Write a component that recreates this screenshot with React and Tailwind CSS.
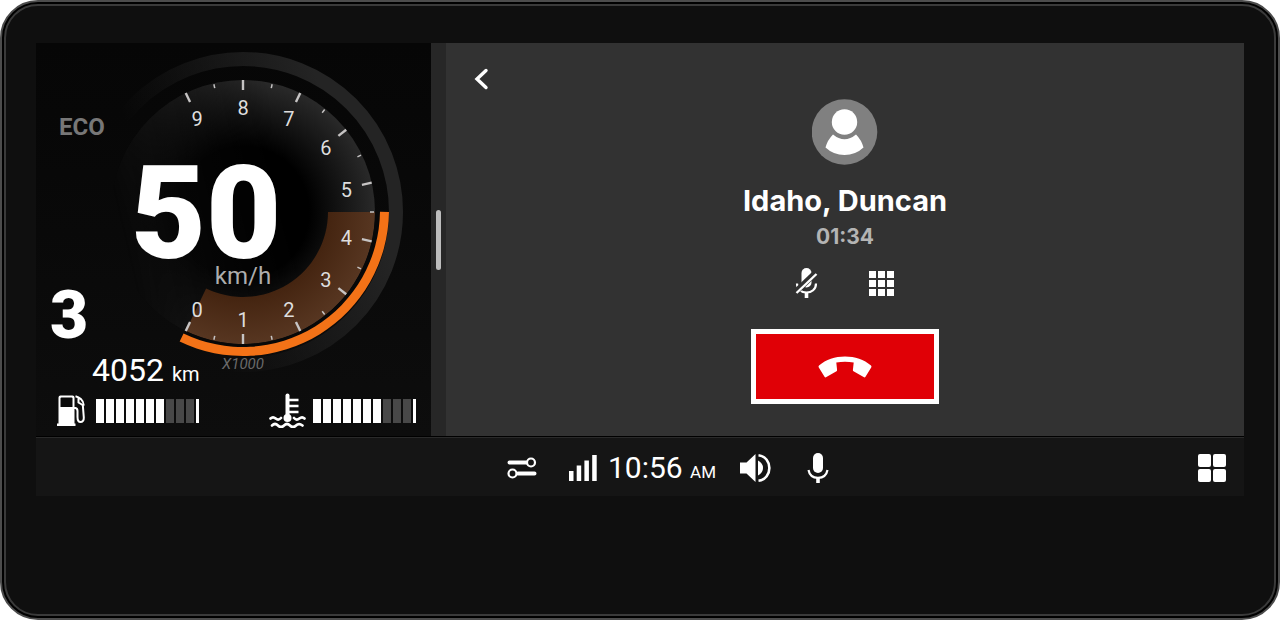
const STEP = 180 / 7;
const RPM = 4.5;

// 1 sits at the bottom of the dial, values grow counter-clockwise
function polar(value, radius) {
  const a = ((value - 1) * STEP * Math.PI) / 180;
  return [radius * Math.sin(a), radius * Math.cos(a)];
}

function ringSegment(from, to, inner, outer) {
  const [ax, ay] = polar(from, outer);
  const [bx, by] = polar(to, outer);
  const [cx, cy] = polar(to, inner);
  const [dx, dy] = polar(from, inner);
  return `M${ax} ${ay}A${outer} ${outer} 0 0 0 ${bx} ${by}L${cx} ${cy}A${inner} ${inner} 0 0 1 ${dx} ${dy}Z`;
}

function Tick({ value, inner, outer, width }) {
  const [x1, y1] = polar(value, inner);
  const [x2, y2] = polar(value, outer);
  return <line x1={x1} y1={y1} x2={x2} y2={y2} stroke="#c6c4c4" strokeWidth={width} />;
}

function Gauge() {
  const numbers = [0, 1, 2, 3, 4, 5, 6, 7, 8, 9];

  return (
    <svg viewBox="-160 -160 320 320" className="absolute top-[9px] right-7 size-[320px] overflow-visible">
      <defs>
        <linearGradient id="ring" gradientUnits="userSpaceOnUse" x1="-70" y1="28" x2="110" y2="-44">
          <stop offset="0" stopColor="#222222" stopOpacity="0" />
          <stop offset="1" stopColor="#242424" />
        </linearGradient>
        <radialGradient id="face" gradientUnits="userSpaceOnUse" cx="0" cy="0" r="132">
          <stop offset="0.5" stopColor="#000000" />
          <stop offset="1" stopColor="#292929" />
        </radialGradient>
        <linearGradient id="fade" gradientUnits="userSpaceOnUse" x1="-120" y1="20" x2="50" y2="-20">
          <stop offset="0" stopColor="#000000" />
          <stop offset="0.4" stopColor="#606060" />
          <stop offset="1" stopColor="#ffffff" />
        </linearGradient>
        <mask id="faceMask">
          <rect x="-160" y="-160" width="320" height="320" fill="url(#fade)" />
        </mask>
        <radialGradient id="sweep" gradientUnits="userSpaceOnUse" cx="0" cy="0" r="132">
          <stop offset="0.64" stopColor="#442410" />
          <stop offset="1" stopColor="#573621" />
        </radialGradient>
      </defs>

      <circle r="153" fill="none" stroke="url(#ring)" strokeWidth="14" />
      <circle r="132" fill="url(#face)" mask="url(#faceMask)" />
      <path d={ringSegment(0, RPM, 85, 132)} fill="url(#sweep)" />
      <path d={ringSegment(0, RPM, 132, 137)} fill="#080808" />
      <path d={ringSegment(0, RPM - 0.03, 137, 146)} transform="translate(0 -2)" fill="#f37217" />

      {numbers.map((n) => (
        <Tick key={n} value={n} inner={122} outer={132} width={2.4} />
      ))}
      {numbers.slice(0, 9).map((n) => (
        <Tick key={n} value={n + 0.5} inner={127} outer={131} width={1.5} />
      ))}
      {numbers.map((n) => {
        const [x, y] = polar(n, 106);
        return (
          <text key={n} x={x} y={y + 9} textAnchor="middle" fontSize="20" fill="#dedede">
            {n}
          </text>
        );
      })}

      <text x="-37" y="46" textAnchor="middle" fontSize="130" fontWeight="900" fill="#ffffff">
        50
      </text>
      <text x="0" y="72" textAnchor="middle" fontSize="24" fill="#adadad">
        km/h
      </text>
      <text x="0" y="157" textAnchor="middle" fontSize="15" fontStyle="italic" fill="#6a6a6a">
        X1000
      </text>
    </svg>
  );
}

function LevelBar({ label, level }) {
  return (
    <div role="meter" aria-label={label} aria-valuenow={level} aria-valuemin={0} aria-valuemax={10} className="flex h-6 gap-[2px]">
      {Array.from({ length: 10 }, (_, i) => (
        <span key={i} className={i < level ? 'w-2 bg-white' : 'w-2 bg-[#484848]'} />
      ))}
      <span className="w-[3px] bg-white" />
    </div>
  );
}

function FuelIcon() {
  return (
    <svg viewBox="0 0 28 32" className="h-8 w-7" fill="none" stroke="#ffffff">
      <path d="M1.500 28.500V2.500a2 2 0 0 1 2-2h12a2 2 0 0 1 2 2V28.500h1V31H0V28.500Z" fill="#ffffff" stroke="none" />
      <path d="M3.500 3.500a1 1 0 0 1 1-1H14.500a1 1 0 0 1 1 1V12H3.500Z" fill="#0a0a0a" stroke="none" />
      <path d="M17 13h1.500q2 .5 2 3v6c0 3.500 1 5 3 5s3.500-1.500 3.300-4.500L25.800 10" strokeWidth="2" />
      <path d="M18.500 1.200C22 2 26.500 5 26.800 10.500M21.500 3v4.500l5 3" strokeWidth="2" />
    </svg>
  );
}

function CoolantIcon() {
  return (
    <svg viewBox="0 0 37 35" className="h-[35px] w-[37px]" fill="none" stroke="#ffffff" strokeLinecap="round">
      <path d="M18.500 2.500V23" strokeWidth="4" />
      <circle cx="18.500" cy="25" r="4" fill="#ffffff" stroke="none" />
      <path d="M20 7h9.500M20 13h9.500M20 19h9.500" strokeWidth="2.400" strokeLinecap="butt" />
      <path d="M1.500 25.500c2-2 3.500-1.500 5.200 0s3.500 1.500 5.300-.5M25 25c1.800 2 3.500 2 5.300.5s3.200-2 5.200 0" strokeWidth="2.600" />
      <path d="M3 32.500c2-2 4-2 6 0s4 2 6 0 4-2 6 0 4 2 6 0 4-2 6.500 0" strokeWidth="2.600" />
    </svg>
  );
}

function Cluster() {
  return (
    <section className="relative flex w-[395px] shrink-0 flex-col bg-gradient-to-b from-[#060606] to-[#0d0d0d] font-['Roboto',sans-serif] text-white">
      <Gauge />
      <p className="mt-[72px] ml-[23px] text-2xl leading-6 font-bold text-[#777777]">ECO</p>
      <p className="mt-auto ml-[14px] text-[66px] leading-[60px] font-black">3</p>
      <p className="mt-[5px] ml-14 text-[32px] leading-[38px]">
        4052 <span className="text-[20px]">km</span>
      </p>
      <div className="mb-2 flex items-center justify-between pr-[15px] pl-[21px]">
        <div className="flex items-center gap-[11px]">
          <FuelIcon />
          <LevelBar label="Fuel" level={7} />
        </div>
        <div className="flex items-center gap-[7px]">
          <CoolantIcon />
          <LevelBar label="Coolant temperature" level={7} />
        </div>
      </div>
    </section>
  );
}

function CallPanel() {
  return (
    <section className="flex flex-1 flex-col bg-[#323232] font-['Inter',sans-serif]">
      <div className="px-6 pt-6">
        <button aria-label="Back" className="block size-6">
          <svg viewBox="0 0 24 24" className="size-6" fill="none" stroke="#ffffff" strokeWidth="3.400" strokeLinecap="round">
            <path d="M16 3.500 7 12l9 8.500" />
          </svg>
        </button>
      </div>

      <div className="mt-2 flex flex-col items-center">
        <svg viewBox="0 0 66 66" className="size-[66px]">
          <circle cx="32.500" cy="33" r="32.800" fill="#808080" />
          <circle cx="32.500" cy="23" r="12.700" fill="#ffffff" />
          <path d="M21 35.500Q32.500 45 44 35.500Q49.500 41 51.500 48.500Q43.500 56 32.500 56T13.500 48.500Q15.500 41 21 35.500Z" fill="#ffffff" />
        </svg>
        <h1 className="mt-5 text-[29px] leading-8 font-bold text-white">Idaho, Duncan</h1>
        <p className="mt-1 text-[21px] leading-8 font-bold text-[#b4b4b4]">01:34</p>

        <div className="mt-[15px] flex items-center gap-12 pr-1">
          <button aria-label="Mute">
            <svg viewBox="1 0 28 30" className="block h-[30px] w-7" fill="none">
              <rect x="9.500" y="0" width="10" height="19.500" rx="5" fill="#ffffff" />
              <path d="M5 15.500c0 6 4.500 9 9.500 9s9.500-3 9.500-9" stroke="#ffffff" strokeWidth="2.200" />
              <path d="M14.500 24v6" stroke="#ffffff" strokeWidth="3.600" />
              <path d="M3 24.500 24 4.500" stroke="#323232" strokeWidth="6" />
              <path d="M4.500 25 24.500 6" stroke="#ffffff" strokeWidth="2.400" />
            </svg>
          </button>
          <button aria-label="Keypad" className="grid grid-cols-3 gap-[2px]">
            {Array.from({ length: 9 }, (_, i) => (
              <span key={i} className="size-[7px] bg-white" />
            ))}
          </button>
        </div>

        <button aria-label="End call" className="mt-[31px] flex h-[75px] w-[188px] items-center justify-center border-5 border-white bg-[#e00006]">
          <svg viewBox="0 0 54 22" className="h-[22px] w-[54px]" fill="#ffffff">
            <path d="M1 9.500C8 3.500 17 .5 27 .5S46 3.500 53 9.500q.9 1 .2 2.100L47.500 20.800q-.8 1-1.900.3L35.500 15.200q-.7-.4-.6-1.200L35.700 6.500Q27 5 18.300 6.500L19.100 14q.1.800-.6 1.200L8.400 21.100q-1.100.7-1.900-.3L.8 11.600Q.1 10.500 1 9.500Z" />
          </svg>
        </button>
      </div>
    </section>
  );
}

function StatusBar() {
  return (
    <footer className="grid h-[59px] grid-cols-[1fr_auto_1fr] items-center border-t border-[#2a2a2a] bg-[#151515] pt-0.5 pr-[18px] font-['Roboto',sans-serif] text-white">
      <div />
      <div className="flex items-center gap-6 pl-[74px]">
        <button aria-label="Settings" className="mr-2">
          <svg viewBox="0 0 30 24" className="block h-6 w-[30px]" fill="none" stroke="#ffffff">
            <path d="M2.500 6.500H19M11 17.500H27.500" strokeWidth="4" strokeLinecap="round" />
            <circle cx="24" cy="6.500" r="4" strokeWidth="2.200" fill="#151515" />
            <circle cx="5.500" cy="17.500" r="4" strokeWidth="2.200" fill="#151515" />
          </svg>
        </button>
        <div className="flex items-center gap-[11px]">
          <svg viewBox="0 0 28 26" className="h-[26px] w-7" fill="#ffffff">
            <path d="M0 16h4.500v10H0zM7.700 10.500h4.500V26H7.700zM15.400 5.500h4.500V26h-4.500zM23.200 0h4.500v26h-4.500z" />
          </svg>
          <p className="pt-1 text-[30px] leading-9">
            10:56 <span className="text-[17px]">AM</span>
          </p>
        </div>
        <button aria-label="Volume" className="mr-3">
          <svg viewBox="0 0 31 30" className="block h-[30px] w-[31px]" fill="#ffffff">
            <path d="M0 9.500h6.500L15.500 1v28l-9-8.500H0Z" />
            <path d="M18 7.500q5 2.500 5 7.500t-5 7.500Z" />
            <path d="M18.500 2.200c14.500 2 14.500 23.600 0 25.600" fill="none" stroke="#ffffff" strokeWidth="2.600" />
          </svg>
        </button>
        <button aria-label="Voice control">
          <svg viewBox="0 0 22 32" className="block h-8 w-[22px]" fill="none">
            <rect x="6" y="1" width="10" height="20" rx="5" fill="#ffffff" />
            <path d="M1.500 18c1 5.500 5 7.800 9.500 7.800s8.500-2.300 9.500-7.800" stroke="#ffffff" strokeWidth="2.200" />
            <path d="M11 25.500V31" stroke="#ffffff" strokeWidth="3.600" />
          </svg>
        </button>
      </div>
      <button aria-label="Apps" className="grid grid-cols-2 gap-[2px] justify-self-end">
        <span className="size-[13px] rounded-xs bg-white" />
        <span className="size-[13px] rounded-xs bg-white" />
        <span className="size-[13px] rounded-xs bg-white" />
        <span className="size-[13px] rounded-xs bg-white" />
      </button>
    </footer>
  );
}

export default function App() {
  return (
    <div className="flex min-h-screen rounded-[38px] border-2 border-[#4c4c4c] bg-black p-[2px]">
      <div className="flex flex-1 flex-col rounded-[34px] border-2 border-[#3a3a3a] bg-[#0f0f0f] px-[30px] pt-[37px] pb-[118px]">
        <main className="flex flex-1 border-b border-black">
          <Cluster />
          <div className="flex w-[15px] shrink-0 items-center justify-center bg-[#272727]">
            <div className="h-[60px] w-[5px] rounded-full bg-[#bdbdbd]" />
          </div>
          <CallPanel />
        </main>
        <StatusBar />
      </div>
    </div>
  );
}
